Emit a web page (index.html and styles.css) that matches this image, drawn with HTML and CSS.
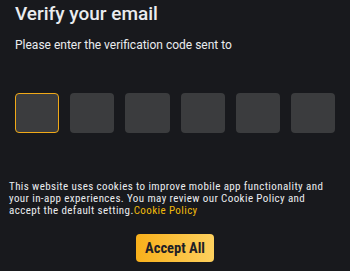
FILE: index.html
```html
<!DOCTYPE html>
<html lang="en">
<head>
<meta charset="utf-8">
<link rel="stylesheet" href="styles.css">
</head>
<body>
<div class="page">
  <main class="verify">
    <h1 class="title">Verify your email</h1>
    <p class="subtitle">Please enter the verification code sent to</p>
    <div class="code">
      <div class="cell active"></div>
      <div class="cell"></div>
      <div class="cell"></div>
      <div class="cell"></div>
      <div class="cell"></div>
      <div class="cell"></div>
    </div>
  </main>
  <section class="cookie">
    <p class="cookie-text">This website uses cookies to improve mobile app functionality and your in-app experiences. You may review our Cookie Policy and accept the default setting.<a class="cookie-link" href="#">Cookie Policy</a></p>
    <div class="cookie-actions">
      <button class="accept">Accept All</button>
    </div>
  </section>
</div>
</body>
</html>
```

FILE: styles.css
```css
html, body {
  margin: 0;
  padding: 0;
  background: #18191d;
}
body {
  font-family: "Roboto", "Noto Sans", sans-serif;
  color: #eaecef;
}
.page {
  height: 271px;
  display: flex;
  flex-direction: column;
  overflow: hidden;
}
.verify {
  padding: 2px 15px 0;
}
.title {
  margin: 0;
  font-size: 19px;
  line-height: 24px;
  font-weight: 500;
}
.subtitle {
  margin: 11px 0 0;
  font-size: 12px;
  line-height: 16px;
  font-weight: 400;
}
.code {
  margin-top: 40px;
  display: grid;
  grid-template-columns: repeat(6, 1fr);
  column-gap: 11px;
}
.cell {
  height: 40px;
  background: #3b3c3e;
  border-radius: 4px;
  box-sizing: border-box;
}
.cell.active {
  border: 1.5px solid #f0a918;
}
.cookie {
  margin-top: auto;
  padding: 0 20px 9px 9px;
}
.cookie-text {
  margin: 0;
  font-family: "Roboto Condensed", "Roboto", sans-serif;
  font-size: 11px;
  letter-spacing: 0.4px;
  line-height: 12px;
  color: #eaecef;
}
.cookie-link {
  color: #f0b90b;
  text-decoration: none;
}
.cookie-actions {
  margin-top: 17px;
  padding-left: 11px;
  display: flex;
  justify-content: center;
}
.accept {
  width: 78px;
  height: 28px;
  border: none;
  border-radius: 4px;
  background: linear-gradient(to right, #f8b01b, #fdd05e);
  color: #1e2026;
  font-family: "Roboto Condensed", "Roboto", sans-serif;
  font-size: 14.5px;
  font-weight: 700;
  padding: 0;
}
```
